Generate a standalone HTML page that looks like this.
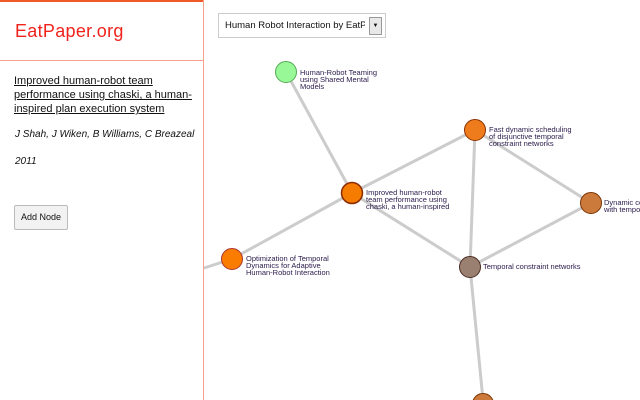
<!DOCTYPE html>
<html><head><meta charset="utf-8"><style>
body{margin:0;width:640px;height:400px;overflow:hidden;background:#fff;font-family:"Liberation Sans",sans-serif;position:relative}
.side{position:absolute;left:0;top:0;width:203px;height:400px;border-right:1px solid #f7a08a}
.hdr{position:absolute;left:0;top:0;width:203px;height:58px;border-top:2px solid #f05a28;border-bottom:1px solid #f7a08a}
.hdr span{position:absolute;left:15px;top:19px;font-size:18px;color:#f0231c;letter-spacing:0.3px}
.title{position:absolute;left:14px;top:74px;width:190px;white-space:nowrap;font-size:11px;line-height:14px;color:#111;text-decoration:underline}
.auth{position:absolute;left:15px;top:129px;font-size:10px;font-style:italic;color:#111}
.yr{position:absolute;left:15px;top:156px;font-size:10px;font-style:italic;color:#111}
.btn{position:absolute;left:14px;top:205px;width:52px;height:23px;border:1px solid #bbb;border-radius:2px;background:#f2f2f2;font-size:9px;line-height:23px;text-align:center;color:#111}
.sel{position:absolute;left:218px;top:13px;width:166px;height:23px;border:1px solid #ccc;background:#fff;font-size:9.5px;line-height:23px;color:#111;overflow:hidden}
.sel span{position:absolute;left:6px;white-space:nowrap;width:140px;overflow:hidden}
.arr{position:absolute;right:3px;top:3px;width:11px;height:16px;border:1px solid #999;background:#e8e8e8;font-size:6px;line-height:16px;text-align:center}
</style></head><body>
<svg width="640" height="400" style="position:absolute;left:0;top:0">
<g stroke="#ccc" stroke-width="3">
<line x1="286" y1="72" x2="352" y2="193"/>
<line x1="352" y1="193" x2="475" y2="130"/>
<line x1="352" y1="193" x2="232" y2="259"/>
<line x1="232" y1="259" x2="204" y2="268"/>
<line x1="352" y1="193" x2="470" y2="267"/>
<line x1="475" y1="130" x2="470" y2="267"/>
<line x1="475" y1="130" x2="591" y2="203"/>
<line x1="591" y1="203" x2="470" y2="267"/>
<line x1="470" y1="267" x2="483" y2="400"/>
</g>
<g stroke-width="1">
<circle cx="286" cy="72" r="10.5" fill="#98f898" stroke="#5a5"/>
<circle cx="352" cy="193" r="10.5" fill="#f57c00" stroke="#8a2a00" stroke-width="1.5"/>
<circle cx="475" cy="130" r="10.5" fill="#ee7c1c" stroke="#8a3000"/>
<circle cx="591" cy="203" r="10.5" fill="#cc7a3c" stroke="#7a3300"/>
<circle cx="232" cy="259" r="10.5" fill="#fa7c00" stroke="#a33"/>
<circle cx="470" cy="267" r="10.5" fill="#9a8070" stroke="#4a2a20"/>
<circle cx="483" cy="404" r="10.5" fill="#cc7a3c" stroke="#7a3300"/>
</g>
<g font-family="Liberation Sans, sans-serif" font-size="7.5" fill="#2a1a4a">
<text x="300" y="75">Human-Robot Teaming</text><text x="300" y="82">using Shared Mental</text><text x="300" y="89">Models</text>
<text x="366" y="195">Improved human-robot</text><text x="366" y="202">team performance using</text><text x="366" y="209">chaski, a human-inspired</text>
<text x="489" y="132">Fast dynamic scheduling</text><text x="489" y="139">of disjunctive temporal</text><text x="489" y="146">constraint networks</text>
<text x="604" y="205">Dynamic co</text><text x="604" y="212">with tempor</text>
<text x="246" y="261">Optimization of Temporal</text><text x="246" y="268">Dynamics for Adaptive</text><text x="246" y="275">Human-Robot Interaction</text>
<text x="483" y="269">Temporal constraint networks</text>
</g>
</svg>
<div class="side"></div>
<div class="hdr"><span>EatPaper.org</span></div>
<div class="title">Improved human-robot team<br>performance using chaski, a human-<br>inspired plan execution system</div>
<div class="auth">J Shah, J Wiken, B Williams, C Breazeal</div>
<div class="yr">2011</div>
<div class="btn">Add Node</div>
<div class="sel"><span>Human Robot Interaction by EatPaper</span><div class="arr">▼</div></div>
</body></html>
